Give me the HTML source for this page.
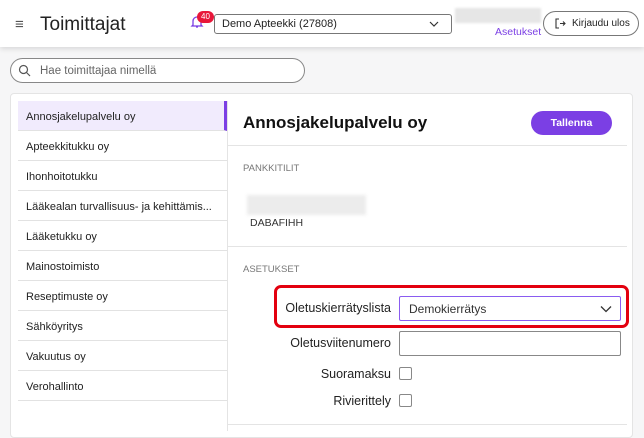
<!DOCTYPE html>
<html><head><meta charset="utf-8"><style>
*{box-sizing:border-box;margin:0;padding:0}
body{width:644px;height:431px;overflow:hidden;background:#f6f6f7;font-family:"Liberation Sans",sans-serif;color:#222;position:relative}
.a{position:absolute}
.hdr{left:0;top:0;width:644px;height:47px;background:#fff;box-shadow:0 2px 5px rgba(0,0,0,.12)}
.row{position:absolute;left:18px;width:209px;height:30px;border-bottom:1px solid #e2e2e2;font-size:11px;padding:10px 0 0 8px;color:#222}
.lbl{position:absolute;font-size:12.5px;color:#222;text-align:right}
.cb{position:absolute;left:399px;width:13px;height:13px;border:1px solid #888;border-radius:2px;background:#fff}
</style></head><body>
<div class="a hdr"></div>
<div class="a" style="left:15px;top:16px;font-size:15px;color:#555">≡</div>
<div class="a" style="left:40px;top:14px;font-size:19px;color:#222">Toimittajat</div>
<svg class="a" style="left:190px;top:15px" width="14" height="14" viewBox="0 0 14 14"><path d="M3 10V6a4 4 0 0 1 8 0v4l1 1H2z M6 12h2" fill="none" stroke="#7b3fe4" stroke-width="1.3"/></svg>
<div class="a" style="left:197px;top:11px;width:17px;height:12px;border-radius:6px;background:#e8173a;color:#fff;font-size:8px;text-align:center;line-height:12px">40</div>
<div class="a" style="left:214px;top:14px;width:238px;height:20px;border:1px solid #777;border-radius:3px;background:#fff;font-size:11px;padding:3px 0 0 7px">Demo Apteekki (27808)</div>
<svg class="a" style="left:429px;top:20px" width="10" height="8"><path d="M1 2l4 4 4-4" fill="none" stroke="#333" stroke-width="1.2"/></svg>
<div class="a" style="left:455px;top:8px;width:86px;height:15px;background:#e6e6e6;filter:blur(1px)"></div>
<div class="a" style="left:495px;top:26px;font-size:10.5px;color:#7b3fe4">Asetukset</div>
<div class="a" style="left:543px;top:11px;width:96px;height:25px;border:1px solid #777;border-radius:13px;background:#fff;font-size:10px;padding:6px 0 0 28px">Kirjaudu ulos</div>
<svg class="a" style="left:555px;top:18px" width="11" height="11" viewBox="0 0 11 11"><path d="M4 1H1v9h3 M5 5.5h5 M8 3.5l2 2-2 2" fill="none" stroke="#333" stroke-width="1.1"/></svg>
<div class="a" style="left:10px;top:58px;width:295px;height:25px;border:1px solid #888;border-radius:13px;background:#fff;font-size:11.5px;color:#666;padding:6px 0 0 29px">Hae toimittajaa nimellä</div>
<svg class="a" style="left:18px;top:64px" width="13" height="13"><circle cx="5.5" cy="5.5" r="4" fill="none" stroke="#555" stroke-width="1.2"/><path d="M8.5 8.5l3.5 3.5" stroke="#555" stroke-width="1.2"/></svg>
<div class="a" style="left:10px;top:93px;width:623px;height:345px;background:#fff;border:1px solid #e4e4e4;border-radius:4px"></div>
<div class="row" style="top:101px;background:#f1ebfd;border-right:3px solid #7b3fe4">Annosjakelupalvelu oy</div>
<div class="row" style="top:131px">Apteekkitukku oy</div>
<div class="row" style="top:161px">Ihonhoitotukku</div>
<div class="row" style="top:191px">Lääkealan turvallisuus- ja kehittämis...</div>
<div class="row" style="top:221px">Lääketukku oy</div>
<div class="row" style="top:251px">Mainostoimisto</div>
<div class="row" style="top:281px">Reseptimuste oy</div>
<div class="row" style="top:311px">Sähköyritys</div>
<div class="row" style="top:341px">Vakuutus oy</div>
<div class="row" style="top:371px">Verohallinto</div>
<div class="a" style="left:227px;top:101px;width:1px;height:330px;background:#e4e4e4"></div>
<div class="a" style="left:243px;top:113px;font-size:17px;font-weight:bold;color:#111">Annosjakelupalvelu oy</div>
<div class="a" style="left:531px;top:111px;width:81px;height:24px;border-radius:12px;background:#7b3fe4;color:#fff;font-size:10.5px;font-weight:bold;text-align:center;line-height:24px">Tallenna</div>
<div class="a" style="left:228px;top:145px;width:399px;height:1px;background:#e4e4e4"></div>
<div class="a" style="left:243px;top:163px;font-size:9.5px;color:#777">PANKKITILIT</div>
<div class="a" style="left:247px;top:195px;width:119px;height:20px;background:#ececec;filter:blur(1.5px)"></div>
<div class="a" style="left:250px;top:217px;font-size:10.5px;color:#333">DABAFIHH</div>
<div class="a" style="left:228px;top:246px;width:399px;height:1px;background:#e4e4e4"></div>
<div class="a" style="left:243px;top:264px;font-size:9.5px;color:#777">ASETUKSET</div>
<div class="a" style="left:274px;top:285px;width:355px;height:43px;border:3px solid #e3000f;border-radius:7px"></div>
<div class="lbl" style="left:280px;width:111px;top:301px">Oletuskierrätyslista</div>
<div class="a" style="left:399px;top:296px;width:222px;height:25px;border:1.5px solid #8a5cf0;border-radius:2px;background:#fff;font-size:12px;padding:5px 0 0 9px;color:#333">Demokierrätys</div>
<svg class="a" style="left:600px;top:305px" width="12" height="8"><path d="M1 1.5l5 5 5-5" fill="none" stroke="#333" stroke-width="1.3"/></svg>
<div class="lbl" style="left:280px;width:111px;top:336px">Oletusviitenumero</div>
<div class="a" style="left:399px;top:331px;width:222px;height:25px;border:1px solid #888;border-radius:2px;background:#fff"></div>
<div class="lbl" style="left:280px;width:111px;top:367px">Suoramaksu</div>
<div class="cb" style="top:367px"></div>
<div class="lbl" style="left:280px;width:111px;top:394px">Rivierittely</div>
<div class="cb" style="top:394px"></div>
<div class="a" style="left:228px;top:424px;width:399px;height:1px;background:#e4e4e4"></div>
</body></html>
